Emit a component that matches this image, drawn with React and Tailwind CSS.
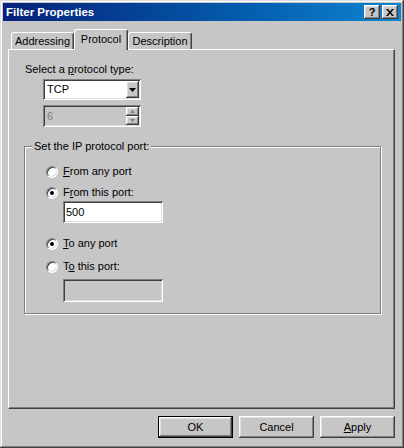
const raised =
  "shadow-[inset_-1px_-1px_#404040,inset_1px_1px_#fff,inset_-2px_-2px_#808080,inset_2px_2px_#dfdfdf]";
const sunken =
  "shadow-[inset_1px_1px_#808080,inset_-1px_-1px_#fff,inset_2px_2px_#404040,inset_-2px_-2px_#dfdfdf]";

function TitleBar() {
  return (
    <div className="flex h-[18px] items-center justify-between bg-gradient-to-r from-[#08207a] to-[#1084d0] pl-[3px] pr-[3px]">
      <span className="text-[11.5px] font-bold leading-[13px] text-white">Filter Properties</span>
      <div className="flex gap-[2px]">
        <div className={`flex h-[14px] w-[16px] items-center justify-center bg-[#c6c6c6] ${raised}`}>
          <span className="text-[11px] font-bold leading-[11px] text-black">?</span>
        </div>
        <div className={`flex h-[14px] w-[16px] items-center justify-center bg-[#c6c6c6] ${raised}`}>
          <svg width="8" height="7" viewBox="0 0 8 7">
            <path d="M0 0h2l2 2.5L6 0h2L5 3.5 8 7H6L4 4.5 2 7H0l3-3.5z" fill="#000" />
          </svg>
        </div>
      </div>
    </div>
  );
}

function Tab({ label, active, width }) {
  if (active) {
    return (
      <div
        className={`relative z-10 -mb-[1px] flex h-[21px] items-start justify-center rounded-t-[3px] border-l border-t border-r border-l-white border-t-white border-r-[#404040] bg-[#c6c6c6] pt-[3px] shadow-[inset_-1px_0_#808080] ${width}`}
      >
        {label}
      </div>
    );
  }
  return (
    <div
      className={`flex h-[17px] items-start justify-center rounded-t-[3px] border-l border-t border-r border-l-white border-t-white border-r-[#404040] pt-[2px] shadow-[inset_-1px_0_#808080] ${width}`}
    >
      {label}
    </div>
  );
}

function Radio({ checked, children }) {
  return (
    <div className="flex h-[13px] items-center">
      <div className="ml-[21px] flex h-[12px] w-[12px] items-center justify-center rounded-full border border-b-white border-l-[#808080] border-r-white border-t-[#808080] bg-white shadow-[inset_1px_1px_#404040,inset_-1px_-1px_#dfdfdf]">
        {checked && <div className="h-[4px] w-[4px] rounded-full bg-black" />}
      </div>
      <span className="ml-[5px]">{children}</span>
    </div>
  );
}

function Button({ children, isDefault }) {
  if (isDefault) {
    return (
      <div className="h-[22px] w-[75px] border border-black">
        <div className={`flex h-full w-full items-center justify-center bg-[#c6c6c6] ${raised}`}>{children}</div>
      </div>
    );
  }
  return (
    <div className={`flex h-[22px] w-[75px] items-center justify-center bg-[#c6c6c6] ${raised}`}>{children}</div>
  );
}

export default function App() {
  return (
    <div
      className={`flex h-[448px] w-[404px] flex-col bg-[#c6c6c6] p-[3px] font-['Liberation_Sans',Arial,sans-serif] text-[11px] leading-[13px] text-black shadow-[inset_-1px_-1px_#404040,inset_1px_1px_#dfdfdf,inset_-2px_-2px_#808080,inset_2px_2px_#fff]`}
    >
      <TitleBar />

      <div className="ml-[5px] mt-[8px] flex h-[20px] items-end pl-[3px]">
        <Tab label="Addressing" width="w-[63px]" />
        <Tab label="Protocol" width="w-[54px]" active />
        <Tab label="Description" width="w-[64px]" />
      </div>

      <div className="ml-[5px] h-[360px] w-[387px] border border-b-[#404040] border-l-white border-r-[#404040] border-t-white shadow-[inset_-1px_-1px_#808080] pl-[16px] pt-[13px]">
        <div>
          Select a <span className="underline">p</span>rotocol type:
        </div>

        <div className={`ml-[18px] mt-[3px] flex h-[21px] w-[98px] items-center justify-between bg-white pl-[4px] pr-[2px] ${sunken}`}>
          <span>TCP</span>
          <div className={`flex h-[17px] w-[13px] items-center justify-center bg-[#c6c6c6] ${raised}`}>
            <svg width="7" height="4" viewBox="0 0 7 4">
              <path d="M0 0h7L3.5 4z" fill="#000" />
            </svg>
          </div>
        </div>

        <div className={`ml-[18px] mt-[5px] flex h-[22px] w-[98px] items-center justify-between bg-[#c6c6c6] pl-[4px] pr-[2px] ${sunken}`}>
          <span className="text-[#808080]">6</span>
          <div className="flex flex-col">
            <div className={`flex h-[9px] w-[13px] items-center justify-center bg-[#c6c6c6] ${raised}`}>
              <svg width="5" height="3" viewBox="0 0 5 3">
                <path d="M0 3h5L2.5 0z" fill="#808080" />
              </svg>
            </div>
            <div className={`flex h-[9px] w-[13px] items-center justify-center bg-[#c6c6c6] ${raised}`}>
              <svg width="5" height="3" viewBox="0 0 5 3">
                <path d="M0 0h5L2.5 3z" fill="#808080" />
              </svg>
            </div>
          </div>
        </div>

        <div className="-ml-[1px] mt-[19px] h-[168px] w-[357px] border border-[#808080] shadow-[inset_1px_1px_#fff,1px_1px_#fff]">
          <div className="-mt-[7px] ml-[7px] h-[13px] w-fit bg-[#c6c6c6] px-[2px]">Set the IP protocol port:</div>

          <div className="mt-[12px]">
            <Radio>
              <span className="underline">F</span>rom any port
            </Radio>
          </div>
          <div className="mt-[8px]">
            <Radio checked>
              F<span className="underline">r</span>om this port:
            </Radio>
          </div>
          <div className={`ml-[38px] mt-[2px] flex h-[22px] w-[100px] items-center bg-white pl-[3px] ${sunken}`}>500</div>
          <div className="mt-[14px]">
            <Radio checked>
              <span className="underline">T</span>o any port
            </Radio>
          </div>
          <div className="mt-[10px]">
            <Radio>
              T<span className="underline">o</span> this port:
            </Radio>
          </div>
          <div className={`ml-[38px] mt-[6px] h-[23px] w-[100px] bg-[#c6c6c6] ${sunken}`} />
        </div>
      </div>

      <div className="mt-[7px] flex justify-end gap-[6px] pr-[6px]">
        <Button isDefault>OK</Button>
        <Button>Cancel</Button>
        <Button>
          <span className="underline">A</span>pply
        </Button>
      </div>
    </div>
  );
}
